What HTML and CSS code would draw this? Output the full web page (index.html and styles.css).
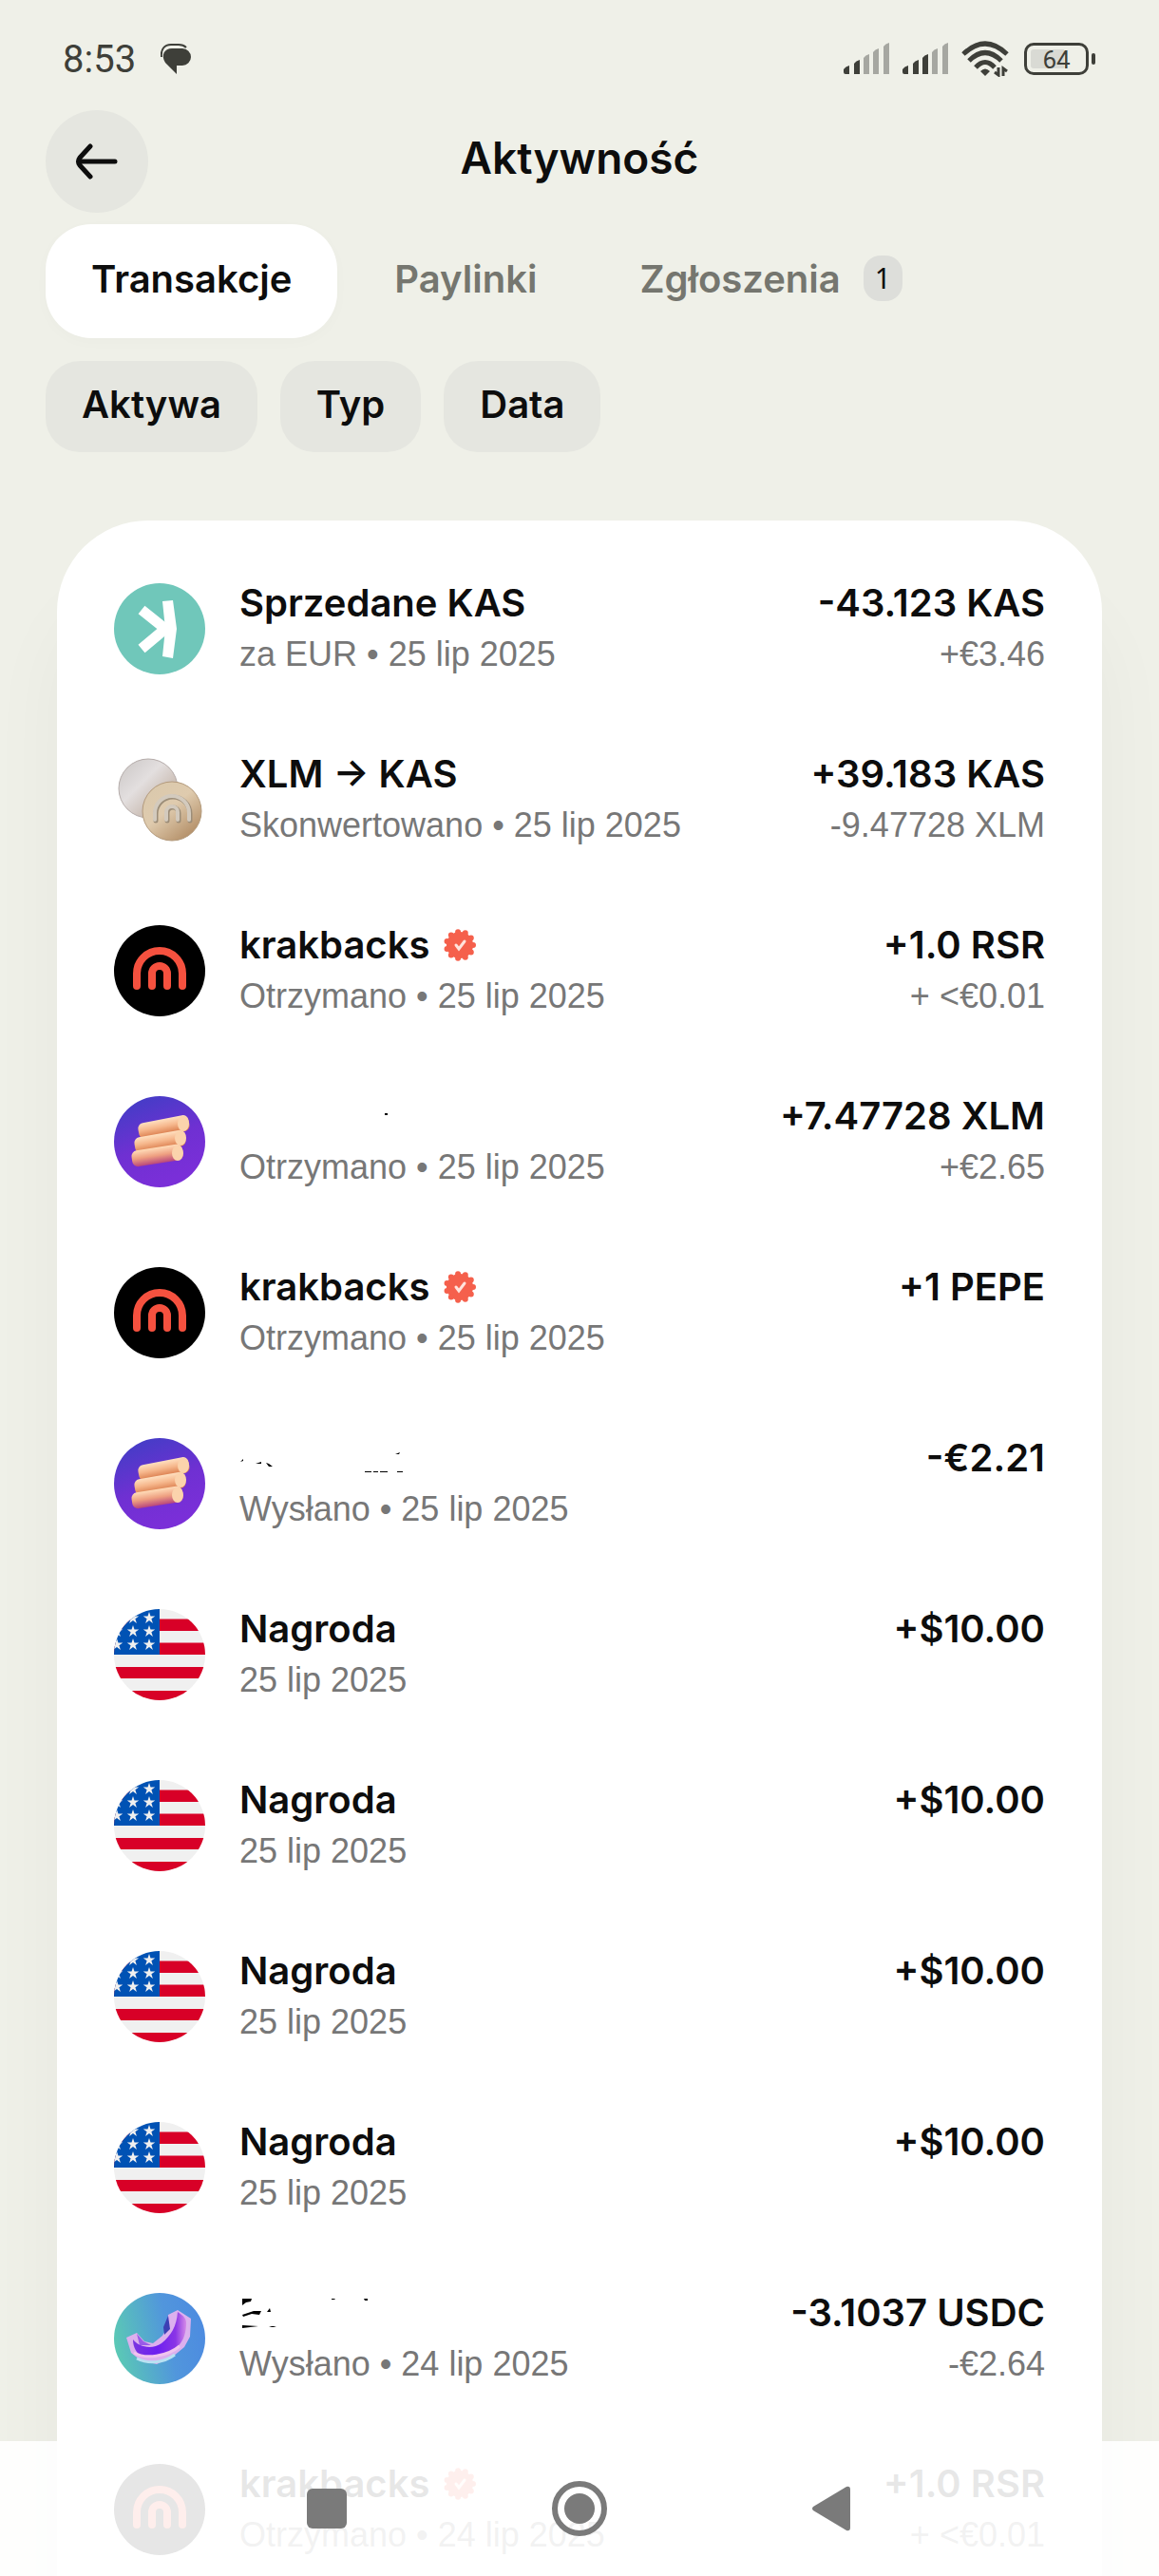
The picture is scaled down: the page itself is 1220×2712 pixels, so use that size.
FILE: index.html
```html
<!DOCTYPE html>
<html lang="pl">
<head>
    <meta charset="UTF-8">
    <meta name="viewport" content="width=device-width, initial-scale=1.0">
    <title>Aktywność</title>
    <link rel="stylesheet" href="styles.css">
</head>
<body>
    <!-- shared icons -->
    <svg class="defs" aria-hidden="true">
        <defs>
            <linearGradient id="violet" x1="0" y1="0" x2="0.4" y2="1">
                <stop offset="0" stop-color="#3b3fc4"/>
                <stop offset="0.6" stop-color="#6f30d2"/>
                <stop offset="1" stop-color="#7a2fd8"/>
            </linearGradient>
            <linearGradient id="log" x1="0" y1="0" x2="0" y2="1">
                <stop offset="0" stop-color="#ffe0c0"/>
                <stop offset="0.45" stop-color="#f6b78c"/>
                <stop offset="1" stop-color="#d67443"/>
            </linearGradient>
            <linearGradient id="log-low" x1="0" y1="0" x2="0" y2="1">
                <stop offset="0" stop-color="#ffdcb8"/>
                <stop offset="0.5" stop-color="#ee9f80"/>
                <stop offset="1" stop-color="#b8457c"/>
            </linearGradient>
            <linearGradient id="silver" x1="0" y1="0" x2="1" y2="1">
                <stop offset="0" stop-color="#c9c5c4"/>
                <stop offset="0.4" stop-color="#e3dfdf"/>
                <stop offset="1" stop-color="#b39c8a"/>
            </linearGradient>
            <linearGradient id="gold" x1="0" y1="0" x2="0.8" y2="1">
                <stop offset="0" stop-color="#d9c8ac"/>
                <stop offset="0.5" stop-color="#dfcbae"/>
                <stop offset="1" stop-color="#b08a62"/>
            </linearGradient>
            <linearGradient id="sea" x1="0" y1="0.6" x2="1" y2="0.4">
                <stop offset="0" stop-color="#5bcab4"/>
                <stop offset="0.6" stop-color="#5196dc"/>
                <stop offset="1" stop-color="#4d8be0"/>
            </linearGradient>
            <linearGradient id="tube" x1="0" y1="0" x2="1" y2="0">
                <stop offset="0" stop-color="#7a35e0"/>
                <stop offset="0.45" stop-color="#6d1ff0"/>
                <stop offset="0.8" stop-color="#8a35e6"/>
                <stop offset="1" stop-color="#d58be8"/>
            </linearGradient>
            <clipPath id="round"><circle cx="48" cy="48" r="48"/></clipPath>
        </defs>
        <symbol id="kas" viewBox="0 0 96 96">
            <circle cx="48" cy="48" r="48" fill="#70c7ba"/>
            <path d="M51 19l11-1 4 30-4 31-11-2 3-29z" fill="#fff"/>
            <path d="M29 28l25 20-25 21" fill="none" stroke="#fff" stroke-width="11"/>
        </symbol>
        <symbol id="coins" viewBox="0 0 96 96">
            <circle cx="36" cy="36" r="31" fill="url(#silver)" stroke="#b5acaa"/>
            <circle cx="61" cy="60" r="31" fill="url(#gold)" stroke="#b39a7c"/>
            <g fill="none" stroke-linecap="round">
                <path d="M44 70v-7a18 18 0 0 1 36 0v7M56 70v-8a6 6 0 0 1 12 0v8" stroke="#9c8d78" stroke-width="5"/>
                <path d="M43 69v-7a18 18 0 0 1 36 0v7M55 69v-8a6 6 0 0 1 12 0v8" stroke="#d3cabd" stroke-width="4"/>
            </g>
        </symbol>
        <symbol id="krak" viewBox="0 0 96 96">
            <circle cx="48" cy="48" r="48" fill="#000"/>
            <path d="M24 64V51a24 24 0 0 1 48 0v13M40 64V51a8 8 0 0 1 16 0v13" fill="none" stroke="#f5513f" stroke-width="8" stroke-linecap="round"/>
        </symbol>
        <symbol id="logs" viewBox="0 0 96 96">
            <circle cx="48" cy="48" r="48" fill="url(#violet)"/>
            <rect x="26" y="29" width="54" height="17" rx="6" fill="url(#log)" transform="rotate(-11 27 38)"/>
            <ellipse cx="73" cy="29" rx="6" ry="8" fill="#fbd3ac"/>
            <rect x="22" y="44" width="54" height="17" rx="6" fill="url(#log)" transform="rotate(-10 23 53)"/>
            <ellipse cx="70" cy="44" rx="6" ry="8" fill="#fbd3ac"/>
            <rect x="19" y="58" width="54" height="17" rx="6" fill="url(#log-low)" transform="rotate(-9 20 67)"/>
            <ellipse cx="67" cy="60" rx="6" ry="8" fill="#fbd3ac"/>
        </symbol>
        <symbol id="usa" viewBox="0 0 96 96">
            <g clip-path="url(#round)">
                <path d="M0 0h96v96H0z" fill="#f0f0f0"/>
                <path d="M0 10.500h96v12.500H0zM0 35.500h96V48H0zM0 61h96v12H0zM0 86h96v10H0z" fill="#d80027"/>
                <path d="M0 0h48v48H0z" fill="#0052b4"/>
                <g fill="#f0f0f0">
                    <path id="star" d="M37 3l1.500 4.500h4.800l-3.900 2.800 1.500 4.600-3.900-2.800-3.900 2.800 1.500-4.600-3.900-2.800h4.800z"/>
                    <use href="#star" x="-17"/>
                    <use href="#star" y="14"/>
                    <use href="#star" x="-17" y="14"/>
                    <use href="#star" x="-34" y="14"/>
                    <use href="#star" y="28"/>
                    <use href="#star" x="-17" y="28"/>
                    <use href="#star" x="-34" y="28"/>
                </g>
            </g>
        </symbol>
        <symbol id="phone" viewBox="0 0 96 96">
            <circle cx="48" cy="48" r="48" fill="url(#sea)"/>
            <path d="M13 47l11-5 8 9 9 2 10-8 5-9 1-13 10-5 14 9-1 19-6 11-12 10-17 8-17-4-10-8z" fill="#dcb0ee"/>
            <path d="M20 49c6 8 20 11 30 4 10-8 16-18 17-33 6 4 10 7 9 14-1 18-10 25-20 29-12 5-22 6-29 2-5-4-7-10-7-16z" fill="url(#tube)"/>
            <path d="M57 24l2 14-6 6-1-8z" fill="#3c3fb4"/>
            <path d="M24 43l7 8 8 4-12 0z" fill="#9a5be8"/>
            <path d="M21 63c12 7 35 4 48-7" fill="none" stroke="#f0c4ee" stroke-width="3"/>
            <path d="M24 69c12 6 28 5 40-4" fill="none" stroke="#b9e2f2" stroke-width="3"/>
        </symbol>
        <symbol id="verified" viewBox="0 0 36 36">
            <circle cx="18" cy="18" r="14" fill="#f5604c"/>
            <circle cx="18" cy="18" r="14" fill="none" stroke="#f5604c" stroke-width="6" stroke-linecap="round" pathLength="11" stroke-dasharray="0 1"/>
            <path d="M14 18l3 4 6-8" fill="none" stroke="#ffe3dc" stroke-width="3" stroke-linecap="round"/>
        </symbol>
    </svg>

    <div class="screen">
        <div class="status">
            <span class="clock">8:53</span>
            <svg class="chat" width="32" height="32" viewBox="0 0 32 32" fill="#3e3f39">
                <path d="M12 5h11a9 9 0 0 1 0 18h-6v9L5 20C0 12 4 5 12 5z"/>
                <path d="M1 14C0 6 4 1 11 1h8c4 0 6 1 8 3" fill="none" stroke="#3e3f39" stroke-width="2"/>
            </svg>
            <div class="status-icons">
                <svg width="48" height="34" viewBox="0 0 48 34" fill="#a6a7a1">
                    <path d="M0 28q2-3 6-4v9H2q-2 0-2-2zM11 22q2-3 6-4v15h-6z" fill="#3e3f39"/>
                    <path d="M21 16q2-3 6-4v21h-6zM31 10q2-3 6-4v27h-6zM42 4q2-3 6-4v33h-6z"/>
                </svg>
                <svg width="48" height="34" viewBox="0 0 48 34" fill="#a6a7a1">
                    <path d="M0 28q2-3 6-4v9H2q-2 0-2-2zM11 22q2-3 6-4v15h-6zM21 16q2-3 6-4v21h-6z" fill="#3e3f39"/>
                    <path d="M31 10q2-3 6-4v27h-6zM42 4q2-3 6-4v33h-6z"/>
                </svg>
                <svg width="50" height="38" viewBox="0 0 50 38" fill="none" stroke="#3e3f39" stroke-width="5">
                    <path d="M2 14q23-22 46 0M8 21q17-17 34 0M15 28q10-11 20 0"/>
                    <path d="M20 32q5-5 10 0l-5 5z" fill="#3e3f39" stroke="none"/>
                    <path d="M39 28v8l-4-3M44 37v-8l4 3" stroke-width="3"/>
                </svg>
                <div class="battery">64</div>
            </div>
        </div>

        <header class="topbar">
            <button class="back" aria-label="Wstecz">
                <svg width="48" height="48" viewBox="0 0 48 48" fill="none" stroke="#0d0d0d" stroke-width="5" stroke-linecap="round" stroke-linejoin="round">
                    <path d="M43 24H5M17 8L6 20q-3 4 0 8l11 12"/>
                </svg>
            </button>
            <h1>Aktywność</h1>
        </header>

        <nav class="tabs">
            <button class="tab active">Transakcje</button>
            <button class="tab">Paylinki</button>
            <button class="tab">Zgłoszenia <span class="count">1</span></button>
        </nav>

        <div class="filters">
            <button class="chip">Aktywa</button>
            <button class="chip">Typ</button>
            <button class="chip">Data</button>
        </div>

        <ul class="card">
            <li class="row">
                <svg class="avatar"><use href="#kas"/></svg>
                <div class="info">
                    <p class="name">Sprzedane KAS</p>
                    <p class="sub">za EUR • 25 lip 2025</p>
                </div>
                <div class="amount">
                    <p class="name">-43.123 KAS</p>
                    <p class="sub">+€3.46</p>
                </div>
            </li>
            <li class="row">
                <svg class="avatar"><use href="#coins"/></svg>
                <div class="info">
                    <p class="name">XLM → KAS</p>
                    <p class="sub">Skonwertowano • 25 lip 2025</p>
                </div>
                <div class="amount">
                    <p class="name">+39.183 KAS</p>
                    <p class="sub">-9.47728 XLM</p>
                </div>
            </li>
            <li class="row">
                <svg class="avatar"><use href="#krak"/></svg>
                <div class="info">
                    <p class="name">krakbacks <svg class="verified"><use href="#verified"/></svg></p>
                    <p class="sub">Otrzymano • 25 lip 2025</p>
                </div>
                <div class="amount">
                    <p class="name">+1.0 RSR</p>
                    <p class="sub">+ &lt;€0.01</p>
                </div>
            </li>
            <li class="row">
                <svg class="avatar"><use href="#logs"/></svg>
                <div class="info">
                    <p class="name"><svg class="erased" viewBox="0 0 200 54"><path d="M153 24h3v2h-3z"/></svg></p>
                    <p class="sub">Otrzymano • 25 lip 2025</p>
                </div>
                <div class="amount">
                    <p class="name">+7.47728 XLM</p>
                    <p class="sub">+€2.65</p>
                </div>
            </li>
            <li class="row">
                <svg class="avatar"><use href="#krak"/></svg>
                <div class="info">
                    <p class="name">krakbacks <svg class="verified"><use href="#verified"/></svg></p>
                    <p class="sub">Otrzymano • 25 lip 2025</p>
                </div>
                <div class="amount">
                    <p class="name">+1 PEPE</p>
                </div>
            </li>
            <li class="row">
                <svg class="avatar"><use href="#logs"/></svg>
                <div class="info">
                    <p class="name"><svg class="erased" viewBox="0 0 200 54"><path d="M1 31l3-3v2zM17 33l6-2v2zM28 32l3 1 4 3h-4zM164 23l5-2-1 2h-4zM132 41h7v1h-7zM141 41h5v1h-5zM148 41h8v1h-8zM166 41h6v1h-6z"/></svg></p>
                    <p class="sub">Wysłano • 25 lip 2025</p>
                </div>
                <div class="amount">
                    <p class="name">-€2.21</p>
                </div>
            </li>
            <li class="row">
                <svg class="avatar"><use href="#usa"/></svg>
                <div class="info">
                    <p class="name">Nagroda</p>
                    <p class="sub">25 lip 2025</p>
                </div>
                <div class="amount">
                    <p class="name">+$10.00</p>
                </div>
            </li>
            <li class="row">
                <svg class="avatar"><use href="#usa"/></svg>
                <div class="info">
                    <p class="name">Nagroda</p>
                    <p class="sub">25 lip 2025</p>
                </div>
                <div class="amount">
                    <p class="name">+$10.00</p>
                </div>
            </li>
            <li class="row">
                <svg class="avatar"><use href="#usa"/></svg>
                <div class="info">
                    <p class="name">Nagroda</p>
                    <p class="sub">25 lip 2025</p>
                </div>
                <div class="amount">
                    <p class="name">+$10.00</p>
                </div>
            </li>
            <li class="row">
                <svg class="avatar"><use href="#usa"/></svg>
                <div class="info">
                    <p class="name">Nagroda</p>
                    <p class="sub">25 lip 2025</p>
                </div>
                <div class="amount">
                    <p class="name">+$10.00</p>
                </div>
            </li>
            <li class="row">
                <svg class="avatar"><use href="#phone"/></svg>
                <div class="info">
                    <p class="name"><svg class="erased" viewBox="0 0 200 54"><path d="M3 12h10l-1 3-5 1-4 3zM3 29l12-4h8l-2 4-8-1-9 3zM29 26l3-4 1 4zM3 40l17 1-17 2zM31 41h5l3 1h-5zM97 12h4l-1 1h-3zM131 12h4v2h-3z"/></svg></p>
                    <p class="sub">Wysłano • 24 lip 2025</p>
                </div>
                <div class="amount">
                    <p class="name">-3.1037 USDC</p>
                    <p class="sub">-€2.64</p>
                </div>
            </li>
            <li class="row">
                <svg class="avatar"><use href="#krak"/></svg>
                <div class="info">
                    <p class="name">krakbacks <svg class="verified"><use href="#verified"/></svg></p>
                    <p class="sub">Otrzymano • 24 lip 2025</p>
                </div>
                <div class="amount">
                    <p class="name">+1.0 RSR</p>
                    <p class="sub">+ &lt;€0.01</p>
                </div>
            </li>
        </ul>
    </div>

    <div class="sysnav">
        <button aria-label="Ostatnie">
            <svg width="60" height="60" viewBox="0 0 60 60"><rect x="9" y="9" width="42" height="42" rx="6"/></svg>
        </button>
        <button aria-label="Ekran główny">
            <svg width="60" height="60" viewBox="0 0 60 60"><circle cx="30" cy="30" r="16"/><circle cx="30" cy="30" r="26" fill="none" stroke="#7a7a7a" stroke-width="6"/></svg>
        </button>
        <button aria-label="Cofnij">
            <svg width="60" height="60" viewBox="0 0 60 60"><path d="M10 28L45 7q4-1 4 3v40q0 4-4 3L10 32q-2-2 0-4z"/></svg>
        </button>
    </div>
</body>
</html>
```
FILE: styles.css
```css
*{
    box-sizing: border-box;
    margin: 0;
    padding: 0;
}
body{
    background-color: #eff0e8;
    color: #0d0d0d;
    font-family: Inter, "Liberation Sans", sans-serif;
}
button{
    border: none;
    background: none;
    color: inherit;
    font-family: inherit;
}
.defs{
    position: absolute;
    width: 0;
    height: 0;
}
.screen{
    display: flex;
    flex-direction: column;
    height: 100vh;
    overflow: hidden;
}

/* status bar */
.status{
    display: flex;
    align-items: center;
    flex-shrink: 0;
    height: 104px;
    padding: 20px 66px 0;
    font-family: Roboto, sans-serif;
    color: #3e3f39;
}
.clock{
    font-size: 40px;
}
.chat{
    margin-left: 26px;
}
.status-icons{
    display: flex;
    align-items: center;
    gap: 14px;
    margin-left: auto;
}
.battery{
    position: relative;
    width: 68px;
    height: 34px;
    margin: 0 8px 0 2px;
    border: 3px solid #3e3f39;
    border-radius: 10px;
    background: linear-gradient(to right, #d9dad4 64%, transparent 64%) content-box;
    padding: 4px;
    font-size: 26px;
    line-height: 22px;
    text-align: center;
}
.battery::after{
    content: "";
    position: absolute;
    right: -10px;
    top: 8px;
    width: 4px;
    height: 12px;
    border-radius: 2px;
    background-color: #3e3f39;
}

/* header */
.topbar{
    display: grid;
    grid-template-columns: 108px 1fr 108px;
    align-items: center;
    flex-shrink: 0;
    padding: 12px 48px;
}
.back{
    display: flex;
    align-items: center;
    justify-content: center;
    width: 108px;
    height: 108px;
    border-radius: 50%;
    background-color: #e5e6e0;
}
h1{
    padding-bottom: 8px;
    font-size: 46px;
    font-weight: 600;
    text-align: center;
}

/* tabs and filters */
.tabs{
    display: flex;
    gap: 12px;
    flex-shrink: 0;
    padding: 0 48px;
}
.tab{
    display: flex;
    align-items: center;
    gap: 24px;
    height: 120px;
    padding: 0 48px 6px;
    border-radius: 48px;
    color: #75766f;
    font-size: 40px;
    font-weight: 600;
}
.tab.active{
    background-color: #fff;
    color: #0d0d0d;
    box-shadow: 0 4px 16px rgba(0, 0, 0, 0.02);
}
.count{
    padding: 0 12px;
    border-radius: 18px;
    background-color: #dddeda;
    color: #0d0d0d;
    font-family: "Noto Sans", sans-serif;
    font-size: 30px;
    font-weight: 400;
    line-height: 48px;
}
.filters{
    display: flex;
    gap: 24px;
    flex-shrink: 0;
    padding: 24px 48px 72px;
}
.chip{
    height: 96px;
    padding: 0 38px 6px;
    border-radius: 36px;
    background-color: #e5e6e0;
    font-size: 40px;
    font-weight: 600;
}

/* transactions */
.card{
    flex: 1;
    margin: 0 60px;
    padding: 60px;
    border-radius: 96px 96px 0 0;
    background-color: #fff;
    box-shadow: 0 84px 84px rgba(0, 0, 0, 0.04);
    list-style: none;
}
.row{
    display: flex;
    align-items: center;
    gap: 36px;
    height: 108px;
    margin-bottom: 72px;
}
.avatar{
    width: 96px;
    height: 96px;
}
.info{
    flex: 1;
}
.amount{
    align-self: flex-start;
    text-align: right;
}
.name{
    display: flex;
    align-items: center;
    gap: 14px;
    height: 54px;
    font-size: 40px;
    font-weight: 600;
    line-height: 54px;
}
.amount .name{
    justify-content: flex-end;
}
.sub{
    color: #777;
    font-family: "Liberation Sans", Arial, sans-serif;
    font-size: 36px;
    line-height: 54px;
}
.verified{
    width: 36px;
    height: 36px;
}
.erased{
    width: 200px;
    height: 54px;
}

/* system buttons over the list */
.sysnav{
    position: fixed;
    left: 0;
    right: 0;
    bottom: 0;
    display: flex;
    justify-content: center;
    gap: 206px;
    height: 142px;
    background-color: rgba(255, 255, 255, 0.9);
}
.sysnav button{
    display: flex;
    align-items: center;
}
.sysnav svg{
    fill: #7a7a7a;
}
```
